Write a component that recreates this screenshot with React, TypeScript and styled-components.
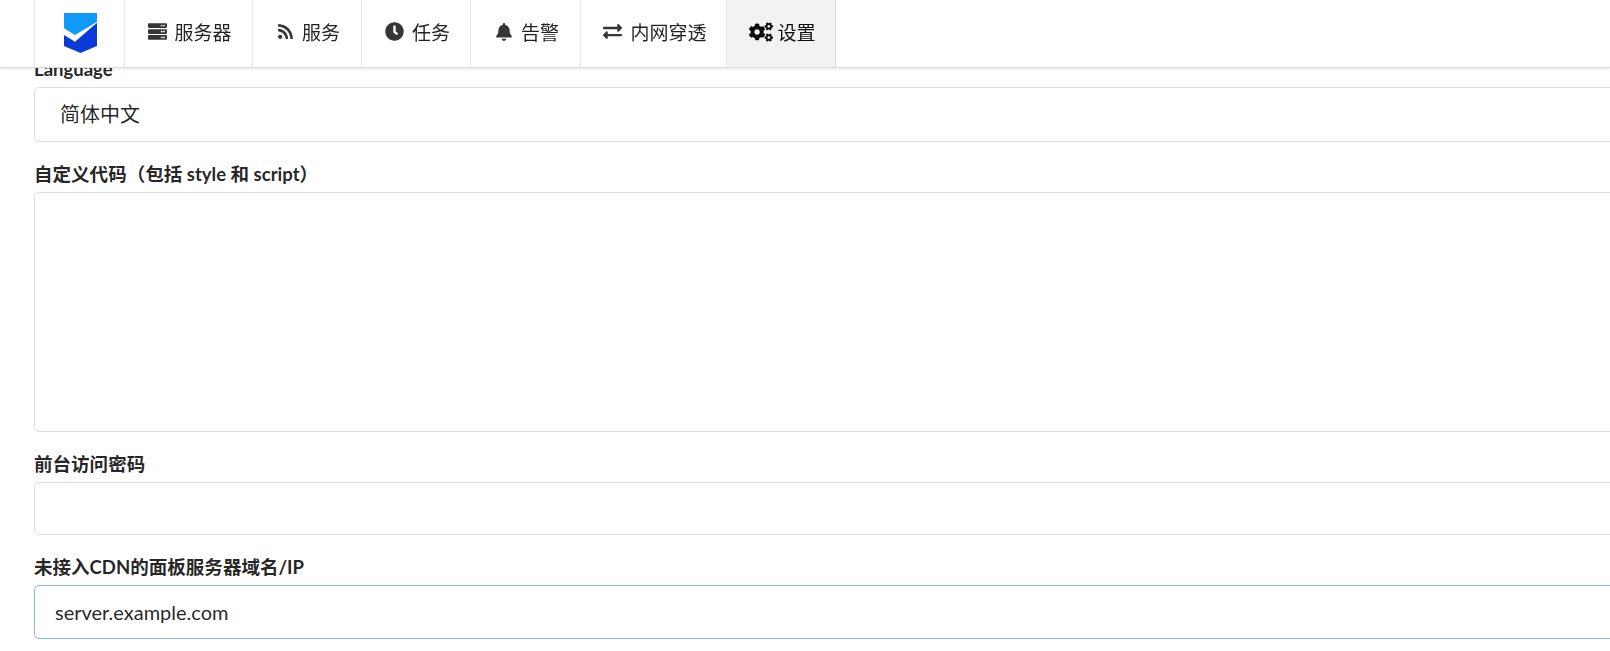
import React from "react"
import styled, { createGlobalStyle } from "styled-components"
import { FaServer, FaRss, FaClock, FaBell, FaExchangeAlt, FaCogs } from "react-icons/fa"
import type { IconType } from "react-icons"

const GlobalStyle = createGlobalStyle`
  html, body {
    margin: 0;
    height: 100%;
    overflow: hidden;
    background: #fff;
  }
  body {
    font-family: Lato, "Noto Sans CJK SC", "Liberation Sans", sans-serif;
    color: rgba(0, 0, 0, 0.87);
  }
`

const TopBar = styled.div`
  position: fixed;
  top: 0;
  left: 0;
  right: 0;
  height: 68px;
  box-sizing: border-box;
  padding-left: 34px;
  display: flex;
  background: #fff;
  border-bottom: 1px solid #dcdcdd;
  box-shadow: 0 1px 3px rgba(34, 36, 38, 0.12);
  z-index: 10;
`

const LogoItem = styled.div`
  width: 89px;
  display: flex;
  align-items: flex-start;
  justify-content: center;
  border-left: 1px solid #e9e9e9;
  border-right: 1px solid #e9e9e9;

  svg {
    margin: 6px 0 0 1px;
  }
`

const NavItem = styled.div<{ $width: number; $gap: number; $active?: boolean }>`
  width: ${(props) => props.$width}px;
  box-sizing: border-box;
  padding: 0 0 4px 3px;
  display: flex;
  align-items: center;
  justify-content: center;
  gap: ${(props) => props.$gap}px;
  font-size: 19px;
  border-right: 1px solid ${(props) => (props.$active ? "#dcdcdc" : "#e9e9e9")};
  background: ${(props) => (props.$active ? "#f2f2f2" : "transparent")};
  color: ${(props) => (props.$active ? "rgba(0, 0, 0, 0.95)" : "rgba(0, 0, 0, 0.87)")};

  svg {
    flex-shrink: 0;
    opacity: ${(props) => (props.$active ? 1 : 0.9)};
  }
`

const Form = styled.div`
  width: 1700px;
  margin-left: 34px;
  padding-top: 59.3px;
  display: flex;
  flex-direction: column;
  gap: 22px;
`

const Field = styled.div`
  display: flex;
  flex-direction: column;
`

const Label = styled.label`
  display: block;
  height: 21px;
  line-height: 21px;
  margin-bottom: 7px;
  font-size: 18.55px;
  font-weight: 700;
  color: rgba(0, 0, 0, 0.87);
`

const SelectBox = styled.div`
  height: 54.5px;
  box-sizing: border-box;
  display: flex;
  align-items: center;
  padding: 0 0 2px 25px;
  font-size: 20px;
  border: 1px solid #dedede;
  border-radius: 5px;
  color: rgba(0, 0, 0, 0.87);
`

const TextInput = styled.input<{ $focused?: boolean }>`
  display: block;
  height: 53.4px;
  box-sizing: border-box;
  padding: 0 20px;
  font-family: inherit;
  font-size: 20px;
  color: rgba(0, 0, 0, 0.87);
  background: #fff;
  border: 1px solid ${(props) => (props.$focused ? "#85b7d9" : "#dedede")};
  border-radius: 5px;
  outline: none;
`

const CodeArea = styled.textarea`
  display: block;
  height: 240.2px;
  box-sizing: border-box;
  font-family: inherit;
  background: #fff;
  border: 1px solid #dedede;
  border-radius: 5px;
  outline: none;
  resize: none;
`

const Logo = () => (
  <svg width="40" height="60" viewBox="0 0 40 60">
    <path d="M4 7H37V40L20.5 47L4 40Z" fill="#0b3ad9" />
    <path d="M4 7H37V17.5L15 30L4 23Z" fill="#0e9af6" />
    <path d="M4 22.3L15 29L40 14L15 35.7L4 29Z" fill="#fff" />
  </svg>
)

const navItems: { label: string; icon: IconType; width: number; size: number; gap: number; active?: boolean }[] = [
  { label: "服务器", icon: FaServer, width: 128, size: 19, gap: 7 },
  { label: "服务", icon: FaRss, width: 109, size: 17, gap: 8 },
  { label: "任务", icon: FaClock, width: 109, size: 19, gap: 8 },
  { label: "告警", icon: FaBell, width: 110, size: 18, gap: 8 },
  { label: "内网穿透", icon: FaExchangeAlt, width: 146, size: 19, gap: 8 },
  { label: "设置", icon: FaCogs, width: 109, size: 24, gap: 4, active: true },
]

export default function App() {
  return (
    <>
      <GlobalStyle />
      <TopBar>
        <LogoItem>
          <Logo />
        </LogoItem>
        {navItems.map((item) => (
          <NavItem key={item.label} $width={item.width} $gap={item.gap} $active={item.active}>
            <item.icon size={item.size} />
            {item.label}
          </NavItem>
        ))}
      </TopBar>
      <Form>
        <Field>
          <Label>Language</Label>
          <SelectBox>简体中文</SelectBox>
        </Field>
        <Field>
          <Label>自定义代码（包括 style 和 script）</Label>
          <CodeArea />
        </Field>
        <Field>
          <Label>前台访问密码</Label>
          <TextInput type="text" />
        </Field>
        <Field>
          <Label>未接入CDN的面板服务器域名/IP</Label>
          <TextInput type="text" $focused defaultValue="server.example.com" />
        </Field>
      </Form>
    </>
  )
}
